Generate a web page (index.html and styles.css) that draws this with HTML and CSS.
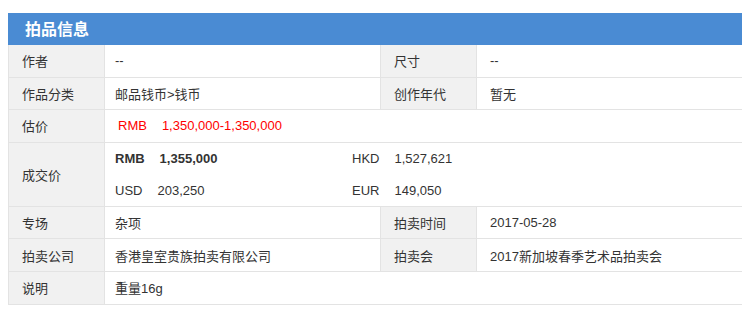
FILE: index.html
```html
<!DOCTYPE html>
<html lang="zh-CN">
<head>
<meta charset="utf-8">
<title>拍品信息</title>
<link rel="stylesheet" href="styles.css">
</head>
<body>
<div class="panel">
  <div class="panel-head">拍品信息</div>
  <table class="info">
    <colgroup>
      <col class="c-label"><col class="c-val1"><col class="c-label"><col class="c-val2">
    </colgroup>
    <tr>
      <td class="lbl">作者</td><td class="val">--</td>
      <td class="lbl">尺寸</td><td class="val val-r">--</td>
    </tr>
    <tr>
      <td class="lbl">作品分类</td><td class="val">邮品钱币&gt;钱币</td>
      <td class="lbl">创作年代</td><td class="val val-r">暂无</td>
    </tr>
    <tr>
      <td class="lbl">估价</td>
      <td class="val" colspan="3"><span class="est"><span class="cur">RMB</span><span>1,350,000-1,350,000</span></span></td>
    </tr>
    <tr>
      <td class="lbl">成交价</td>
      <td class="val" colspan="3">
        <div class="deal">
          <div class="pair strong"><span class="cur">RMB</span><span>1,355,000</span></div>
          <div class="pair"><span class="cur">HKD</span><span>1,527,621</span></div>
          <div class="pair"><span class="cur">USD</span><span>203,250</span></div>
          <div class="pair"><span class="cur">EUR</span><span>149,050</span></div>
        </div>
      </td>
    </tr>
    <tr>
      <td class="lbl">专场</td><td class="val">杂项</td>
      <td class="lbl">拍卖时间</td><td class="val val-r">2017-05-28</td>
    </tr>
    <tr>
      <td class="lbl">拍卖公司</td><td class="val">香港皇室贵族拍卖有限公司</td>
      <td class="lbl">拍卖会</td><td class="val val-r">2017新加坡春季艺术品拍卖会</td>
    </tr>
    <tr>
      <td class="lbl">说明</td><td class="val" colspan="3">重量16g</td>
    </tr>
  </table>
</div>
</body>
</html>
```
FILE: styles.css
```css
html, body {
  margin: 0;
  padding: 0;
  background: #fff;
}
body {
  font-family: "Liberation Sans", Arial, "Noto Sans CJK SC", sans-serif;
  font-size: 13px;
  color: #333;
}
.panel {
  margin: 13px 0 0 8px;
  width: 734px;
}
.panel-head {
  height: 32px;
  line-height: 30px;
  background: #4a8bd3;
  color: #fff;
  font-size: 16px;
  font-weight: bold;
  padding-left: 17px;
  font-family: "Noto Sans CJK SC", sans-serif;
}
.info {
  width: 734px;
  border-collapse: collapse;
  table-layout: fixed;
}
.c-label { width: 96px; }
.c-val1 { width: 276px; }
.c-val2 { width: 266px; }
.info td {
  border: 1px solid #e3e3e3;
  height: 31.6px;
  padding: 0;
  vertical-align: middle;
  white-space: nowrap;
}
.info tr:first-child td { border-top: none; }
.lbl {
  background: #f1f1f1;
  padding-left: 13px !important;
}
.val {
  padding-left: 10px !important;
}
.val-r {
  padding-left: 13px !important;
}
.est {
  color: #ff0000;
  padding-left: 3px;
}
.cur {
  margin-right: 15px;
}
.deal {
  display: grid;
  grid-template-columns: 237px auto;
  grid-auto-rows: 31.5px;
  align-items: center;
}
.pair.strong {
  font-weight: bold;
}
```
